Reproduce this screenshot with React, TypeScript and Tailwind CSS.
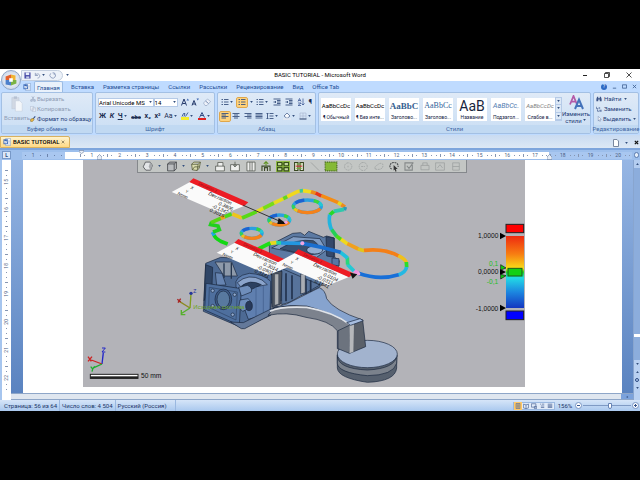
import React from 'react';
import clsx from 'clsx';

const tabs = ['Вставка', 'Разметка страницы', 'Ссылки', 'Рассылки', 'Рецензирование', 'Вид', 'Office Tab'];

const styleCards = [
  { sample: 'AaBbCcDc', name: '¶ Обычный', look: 'text-[6px] text-black' },
  { sample: 'AaBbCcDc', name: '¶ Без инте...', look: 'text-[6px] text-black' },
  { sample: 'AaBbC', name: 'Заголово...', look: "text-[9px] font-bold text-[#365f91] font-['Liberation_Serif',serif]" },
  { sample: 'AaBbCc', name: 'Заголово...', look: "text-[8px] text-[#2f6299] font-['Liberation_Serif',serif]" },
  { sample: 'AaB', name: 'Название', look: 'text-[14px] text-[#17243d]' },
  { sample: 'AaBbCc.', name: 'Подзагол...', look: 'text-[7px] italic text-[#4f7ab0]' },
  { sample: 'AaBbCcDc', name: 'Слабое в...', look: 'text-[6px] italic text-[#808080]' },
];

const Group = ({ title, className, children }: { title: string; className?: string; children: React.ReactNode }) => (
  <section className={clsx('flex flex-col rounded-[2px] border border-[#a3c0e4] bg-gradient-to-b from-[#dfeaf7] to-[#cadef4]', className)}>
    <div className="flex min-h-0 flex-1 items-center px-[2px]">{children}</div>
    <div className="flex h-2 items-center justify-center bg-[#c1d9f2] text-[6px] leading-[8px] whitespace-nowrap text-[#3f66a3]">{title}</div>
  </section>
);

const Tool = ({ label, active, className, children }: { label: string; active?: boolean; className?: string; children: React.ReactNode }) => (
  <button
    aria-label={label}
    className={clsx('flex h-[9px] items-center justify-center px-px text-[7px] leading-[9px] text-[#1c2c50]', active && 'rounded-[1px] bg-[#ffd27a] outline outline-[#e0a74a]', className)}
  >
    {children}
  </button>
);

const Caret = () => (
  <svg viewBox="0 0 4 3" className="mx-px h-[2px] w-[3px] shrink-0"><path d="M0 0h4L2 3z" fill="#34507f" /></svg>
);

const WordIcon = () => (
  <svg viewBox="0 0 18 18" className="h-2 w-2 shrink-0">
    <path d="M6 1h11v16H6z" fill="#fff" stroke="#5d83bd" />
    <path d="M11 5h5M11 8h5M11 11h5M11 14h5" stroke="#7b9bcb" />
    <path d="M1 3h10v11H1z" fill="#3766b5" />
    <path d="M3 6l1.500 6L6 7l1.500 5L9 6" fill="none" stroke="#fff" strokeWidth="1.500" />
  </svg>
);

const Lines = ({ kind }: { kind: 'left' | 'center' | 'right' | 'full' | 'list' | 'indent' | 'spacing' }) => {
  const d = {
    left: 'M1 3h14M1 6h9M1 9h14M1 12h9',
    center: 'M1 3h14M4 6h8M1 9h14M4 12h8',
    right: 'M1 3h14M6 6h9M1 9h14M6 12h9',
    full: 'M1 3h14M1 6h14M1 9h14M1 12h14',
    list: 'M1 3h3M6 3h9M1 8h3M6 8h9M1 13h3M6 13h9',
    indent: 'M1 2h14M8 5h7M8 8h7M8 11h7M1 14h14M1 8h5M4 6l2 2-2 2',
    spacing: 'M7 3h8M7 8h8M7 13h8M3 2v12M1 4l2-2 2 2M1 12l2 2 2-2',
  }[kind];
  return <svg viewBox="0 0 16 16" className="h-2 w-2"><path d={d} fill="none" stroke="#3b5480" strokeWidth="1.800" /></svg>;
};

const TitleBar = () => (
  <header className="flex h-3 items-center bg-white">
    <div className="flex w-[92px] items-center pl-[21px]">
      <div className="flex h-[11px] w-[42px] items-center justify-around rounded-r-full border border-[#c3cede] bg-[#edf2f9] pr-1">
        <button aria-label="Сохранить">
          <svg viewBox="0 0 16 16" className="h-[7px] w-[7px]"><path d="M1 1h14v14H1z" fill="#4b4fa8" /><path d="M4 1h8v6H4z" fill="#e6ecfa" /><path d="M5 10h7v5H5z" fill="#c2cbe8" /></svg>
        </button>
        <button aria-label="Отменить" className="flex items-center">
          <svg viewBox="0 0 16 16" className="h-[7px] w-[7px]"><path d="M3 2v6h6M3 8c3-6 11-4 10 2-.5 3-3 4-5 4" fill="none" stroke="#8d9cbb" strokeWidth="2" /></svg>
          <Caret />
        </button>
        <button aria-label="Вернуть">
          <svg viewBox="0 0 16 16" className="h-[7px] w-[7px]"><path d="M12 2a6.500 6.500 0 1 1-8 1M12 2v5M12 2H8" fill="none" stroke="#8d9cbb" strokeWidth="2" /></svg>
        </button>
      </div>
      <button aria-label="Настройка панели" className="ml-[2px]"><Caret /></button>
    </div>
    <h1 className="flex-1 text-center text-[6px] leading-[12px] text-black">BASIC TUTORIAL - Microsoft Word</h1>
    <div className="flex w-[92px] items-center justify-end gap-4 pr-2">
      <button aria-label="Свернуть"><svg viewBox="0 0 6 6" className="h-[6px] w-[6px]"><path d="M1 3.500h4" stroke="#222" /></svg></button>
      <button aria-label="Развернуть"><svg viewBox="0 0 6 6" className="h-[6px] w-[6px]"><path d="M.5 1.500h4v4h-4zM1.500 1.500v-1h4v4h-1" fill="none" stroke="#222" strokeWidth=".8" /></svg></button>
      <button aria-label="Закрыть"><svg viewBox="0 0 6 6" className="h-[6px] w-[6px]"><path d="M.5.5l5 5m0-5l-5 5" stroke="#222" strokeWidth=".8" /></svg></button>
    </div>
  </header>
);

const TabRow = () => (
  <nav className="flex h-[11px] items-center bg-[#bfdbff] pl-[23px] text-[6px] leading-[11px] whitespace-nowrap text-[#1e4d96]">
    <WordIcon />
    <button className="ml-[3px] h-[11px] w-[29px] rounded-t-[2px] border border-b-0 border-[#9bbbe3] bg-[#e9f1fb]">Главная</button>
    <div className="ml-2 flex gap-[9px]">
      {tabs.map((t) => <button key={t}>{t}</button>)}
    </div>
    <div className="ml-auto flex items-center gap-[5px] pr-[3px]">
      <button aria-label="Справка" className="flex h-[6px] w-[6px] items-center justify-center rounded-full bg-[#2e6ac4] text-[5px] text-white">?</button>
      <button aria-label="Свернуть окно"><svg viewBox="0 0 6 6" className="h-[5px] w-[5px]"><path d="M1 5h4" stroke="#3f5f92" /></svg></button>
      <button aria-label="Восстановить окно"><svg viewBox="0 0 6 6" className="h-[5px] w-[5px]"><path d="M.5 1h5v4h-5z" fill="none" stroke="#3f5f92" /></svg></button>
      <button aria-label="Закрыть окно"><svg viewBox="0 0 6 6" className="h-[5px] w-[5px]"><path d="M1 1l4 4m0-4L1 5" stroke="#3f5f92" /></svg></button>
    </div>
  </nav>
);

const Ribbon = () => (
  <div className="flex h-[43px] gap-[2px] bg-[#bfdbff] px-px pb-px">
    <Group title="Буфер обмена" className="w-[92px]">
      <button className="flex w-[26px] flex-col items-center gap-[2px] text-[6px] leading-[8px] text-[#8f9db5]">
        <svg viewBox="0 0 30 40" className="h-4 w-3"><path d="M2 4h18v28H2z" fill="#d1d8e3" stroke="#b8c3d4" /><path d="M7 1h8v6H7z" fill="#b6c1d2" /><path d="M11 12h11l6 6v20H11z" fill="#f3f6fa" stroke="#b8c3d4" /></svg>
        Вставить
      </button>
      <div className="flex flex-col text-[6px] leading-[10px] whitespace-nowrap text-[#8f9db5]">
        <button className="flex items-center gap-px">
          <svg viewBox="0 0 16 16" className="h-[6px] w-[6px]"><path d="M5 1l6 10M11 1L5 11" stroke="#8a98b2" strokeWidth="1.500" /><path d="M2 10h4v4H2zM10 10h4v4h-4z" fill="none" stroke="#8a98b2" strokeWidth="1.500" /></svg>
          Вырезать
        </button>
        <button className="flex items-center gap-px">
          <svg viewBox="0 0 16 16" className="h-[6px] w-[6px]"><path d="M1 1h9v10H1zM6 5h9v10H6z" fill="#e9eef6" stroke="#96a4bc" /></svg>
          Копировать
        </button>
        <button className="flex items-center gap-px text-[#1c3a75]">
          <svg viewBox="0 0 16 16" className="h-[6px] w-[6px]"><path d="M14 1L8 8" stroke="#2f4d88" strokeWidth="3" /><path d="M2 8l7-2 2 4-5 5-5-1z" fill="#e7b545" stroke="#645020" /></svg>
          Формат по образцу
        </button>
      </div>
    </Group>

    <Group title="Шрифт" className="w-[120px]">
      <div className="flex w-full flex-col gap-[5px]">
        <div className="flex items-center">
          <label aria-label="Шрифт" className="flex h-[9px] w-[57px] items-center border border-[#b5cae7] bg-white">
            <select className="w-full appearance-none bg-transparent text-[6px] leading-[7px] text-black"><option>Arial Unicode MS</option></select>
            <Caret />
          </label>
          <label aria-label="Размер" className="flex h-[9px] w-[25px] items-center border border-[#b5cae7] bg-white">
            <select className="w-full appearance-none bg-transparent text-[6px] leading-[7px] text-black"><option>14</option></select>
            <Caret />
          </label>
          <Tool label="Увеличить размер" className="ml-[2px]">
            <svg viewBox="0 0 16 16" className="h-2 w-2"><path d="M1 15L6 2l5 13M3 11h6" fill="none" stroke="#24396a" strokeWidth="2" /><path d="M11 5l2.500-4L16 5z" fill="#3c64b0" /></svg>
          </Tool>
          <Tool label="Уменьшить размер">
            <svg viewBox="0 0 16 16" className="h-2 w-2"><path d="M2 15L6 5l4 10M3 12h6" fill="none" stroke="#24396a" strokeWidth="2" /><path d="M11 1h5l-2.500 4z" fill="#3c64b0" /></svg>
          </Tool>
          <Tool label="Очистить формат" className="ml-[2px]">
            <svg viewBox="0 0 16 16" className="h-2 w-2"><path d="M1 10l8-8 6 5-7 8H4z" fill="#eef2fa" stroke="#7a8fb3" /><path d="M5 6l6 5" stroke="#7a8fb3" strokeWidth="2" /></svg>
          </Tool>
        </div>
        <div className="flex items-center justify-between">
          <Tool label="Полужирный" className="font-bold">Ж</Tool>
          <Tool label="Курсив" className="font-bold italic">К</Tool>
          <Tool label="Подчеркнутый" className="font-bold"><span className="underline">Ч</span><Caret /></Tool>
          <Tool label="Зачеркнутый"><span className="text-[6px] font-bold line-through">abc</span></Tool>
          <Tool label="Подстрочный" className="font-bold">x₂</Tool>
          <Tool label="Надстрочный" className="font-bold">x²</Tool>
          <Tool label="Регистр">Aa<Caret /></Tool>
          <Tool label="Выделение цветом">
            <svg viewBox="0 0 16 16" className="h-2 w-2"><path d="M0 10h16v6H0z" fill="#f4ee2c" /><path d="M2 9l3-6h3L6 9M9 9l5-8" fill="none" stroke="#456196" strokeWidth="2" /></svg>
            <Caret />
          </Tool>
          <Tool label="Цвет текста">
            <svg viewBox="0 0 16 16" className="h-2 w-2"><path d="M0 12h16v4H0z" fill="#e02020" /><path d="M3 11L8 1l5 10M5 7h6" fill="none" stroke="#344f86" strokeWidth="2" /></svg>
            <Caret />
          </Tool>
        </div>
      </div>
    </Group>

    <Group title="Абзац" className="w-[99px]">
      <div className="flex w-full flex-col gap-[5px]">
        <div className="flex items-center justify-between">
          <Tool label="Маркеры"><Lines kind="list" /><Caret /></Tool>
          <Tool label="Нумерация" active><Lines kind="list" /></Tool>
          <button aria-label="Параметры нумерации"><Caret /></button>
          <Tool label="Многоуровневый список"><Lines kind="list" /><Caret /></Tool>
          <Tool label="Уменьшить отступ"><Lines kind="indent" /></Tool>
          <Tool label="Увеличить отступ"><Lines kind="indent" /></Tool>
          <Tool label="Сортировка"><svg viewBox="0 0 16 16" className="h-2 w-2"><path d="M2 7l3-6 3 6M3 5h4M2 10h6l-6 5h6M12 1v13M9 11l3 3 3-3" fill="none" stroke="#3c5793" strokeWidth="1.500" /></svg></Tool>
          <Tool label="Непечатаемые знаки" className="font-bold">¶</Tool>
        </div>
        <div className="flex items-center justify-between">
          <Tool label="По левому краю" active><Lines kind="left" /></Tool>
          <Tool label="По центру"><Lines kind="center" /></Tool>
          <Tool label="По правому краю"><Lines kind="right" /></Tool>
          <Tool label="По ширине"><Lines kind="full" /></Tool>
          <Tool label="Интервал"><Lines kind="spacing" /><Caret /></Tool>
          <Tool label="Заливка"><svg viewBox="0 0 16 16" className="h-2 w-2"><path d="M2 8l6-6 6 6-6 5z" fill="#f6f8fc" stroke="#49618d" strokeWidth="1.500" /><path d="M0 14h16" stroke="#e4e8f0" strokeWidth="3" /></svg><Caret /></Tool>
          <Tool label="Границы"><svg viewBox="0 0 16 16" className="h-2 w-2"><path d="M2 2h12v12H2zM8 2v12M2 8h12" fill="none" stroke="#9cabc6" /><path d="M1 14h14" stroke="#354a73" strokeWidth="2" /></svg><Caret /></Tool>
        </div>
      </div>
    </Group>

    <Group title="Стили" className="min-w-0 flex-1">
      <div className="flex w-full items-center">
        <div className="flex gap-1">
          {styleCards.map((s, i) => (
            <button key={i} className="flex h-[23px] w-[30px] flex-col items-center justify-end bg-white">
              <span className={clsx('flex h-[14px] items-center leading-[14px] whitespace-nowrap', s.look)}>{s.sample}</span>
              <span className="text-[5px] leading-[8px] whitespace-nowrap text-[#14213f]">{s.name}</span>
            </button>
          ))}
        </div>
        <div className="flex h-[24px] w-[7px] shrink-0 flex-col border border-[#b5cae7] bg-[#dce8f6]">
          {['Вверх', 'Вниз', 'Все стили'].map((n) => (
            <button key={n} aria-label={n} className="flex flex-1 items-center justify-center border-b border-[#b5cae7]"><Caret /></button>
          ))}
        </div>
        <button className="flex flex-1 flex-col items-center text-[6px] leading-[7px] text-[#1c3a75]">
          <svg viewBox="0 0 30 30" className="h-[15px] w-[15px]">
            <path d="M2 19L9 2l7 17M5 13h8" fill="none" stroke="#b35aa8" strokeWidth="3.500" />
            <path d="M12 28l8-19 8 19M15 22h10" fill="none" stroke="#4472ba" strokeWidth="4" />
          </svg>
          Изменить
          <span className="flex items-center">стили<Caret /></span>
        </button>
      </div>
    </Group>

    <Group title="Редактирование" className="w-[46px]">
      <div className="flex flex-col text-[6px] leading-[10px] whitespace-nowrap text-[#1c3a75]">
        <button className="flex items-center gap-[2px]">
          <svg viewBox="0 0 16 16" className="h-[6px] w-[6px]"><path d="M1 8l2-6h3v12H1zM15 8l-2-6h-3v12h5zM6 6h4v3H6z" fill="#3c5487" /></svg>
          Найти <Caret />
        </button>
        <button className="flex items-center gap-[2px]">
          <svg viewBox="0 0 16 16" className="h-[6px] w-[6px]"><path d="M1 2v5h5M4 9v5h4" fill="none" stroke="#4b6393" strokeWidth="2" /><path d="M9 10h6v5H9zM7 3h4v4H7z" fill="#6c83ae" /></svg>
          Заменить
        </button>
        <button className="flex items-center gap-px">
          <svg viewBox="0 0 16 16" className="h-[6px] w-[6px]"><path d="M6 1l8 8-4 .5 2 4-2 1-2-4-2 3z" fill="#fff" stroke="#4b6393" /></svg>
          Выделить<Caret />
        </button>
      </div>
    </Group>
  </div>
);

const DocumentTabs = () => (
  <div className="flex h-[15px] items-end border-b-2 border-[#7ea5dc] bg-gradient-to-b from-[#c9dbf1] to-[#dde8f5]">
    <div className="flex h-[12px] w-[70px] items-center gap-[2px] rounded-tr-[2px] border border-[#d8b160] bg-gradient-to-b from-[#fff3cd] to-[#ffd983] pl-[2px] text-[6px] leading-[10px] font-medium whitespace-nowrap text-black">
      <WordIcon />
      BASIC TUTORIAL
      <button aria-label="Закрыть вкладку" className="ml-auto pr-1">
        <svg viewBox="0 0 6 6" className="h-1 w-1"><path d="M1 1l4 4m0-4L1 5" stroke="#6e6242" /></svg>
      </button>
    </div>
    <div className="ml-auto flex h-[11px] items-center gap-[5px] pr-px">
      <button aria-label="Новый документ"><svg viewBox="0 0 6 8" className="h-2 w-[6px]"><path d="M.5.5h3.500L5.500 2v5.500h-5z" fill="#fff" stroke="#7a889f" /></svg></button>
      <button aria-label="Список вкладок"><Caret /></button>
      <button aria-label="Закрыть"><svg viewBox="0 0 6 6" className="h-[5px] w-[5px]"><path d="M1 1l4 4m0-4L1 5" stroke="#111" strokeWidth="1.500" /></svg></button>
    </div>
  </div>
);

const columns = Array.from({ length: 20 }, (_, i) => i + 1);

const RulerCell = ({ n, outside }: { n: number; outside?: boolean }) => (
  <div className={clsx('flex h-[7px] items-center justify-around text-[5px] leading-[7px] text-[#4a5d80]', outside ? 'bg-[#a9c7f0]' : 'bg-white')}>
    <i className="h-[3px] w-px bg-[#8696b2]" />
    <i className="h-px w-px bg-[#8696b2]" />
    <span className="w-2 text-center">{n}</span>
    <i className="h-px w-px bg-[#8696b2]" />
    <i className="h-px w-px bg-[#8696b2]" />
  </div>
);

const HorizontalRuler = () => (
  <div className="relative flex h-[10px] items-center bg-[#9dbfec]">
    <button aria-label="Табуляция" className="ml-[2px] flex h-[8px] w-[9px] items-center justify-center border border-[#7899c8] bg-[#dbe8f8] text-[5px] leading-[7px] font-bold text-[#2c4a80]">L</button>
    <div className="ml-[11px] flex h-[7px] w-[43px] items-center justify-around bg-[#a9c7f0] text-[5px] leading-[7px] text-[#4a5d80]">
      <i className="h-px w-px bg-[#6c83ac]" />
      <span>1</span>
      <i className="h-px w-px bg-[#6c83ac]" />
      <i className="h-[3px] w-px bg-[#6c83ac]" />
      <i className="h-px w-px bg-[#6c83ac]" />
      <i className="h-px w-px bg-[#6c83ac]" />
    </div>
    <div className="h-[7px] w-[13px] bg-white" />
    <div className="grid flex-1 grid-cols-20">
      {columns.map((n) => <RulerCell key={n} n={n} outside={n > 17} />)}
    </div>
    <button aria-label="Линейка" className="mr-px ml-[2px] flex h-[6px] w-[5px] items-center justify-center rounded-full border border-[#5c7cae] bg-[#e3edf9]" />
    {/* indent markers sit on top of the scale */}
    <svg viewBox="0 0 8 5" className="absolute top-0 left-[79px] h-1 w-[5px]"><path d="M0 0h8v2L4 5 0 2z" fill="#e8eef7" stroke="#6a7f9f" /></svg>
    <svg viewBox="0 0 8 8" className="absolute bottom-0 left-[97px] h-[6px] w-[5px]"><path d="M0 8V4l4-4 4 4v4z" fill="#e8eef7" stroke="#6a7f9f" /></svg>
    <svg viewBox="0 0 8 8" className="absolute right-[88px] bottom-0 h-[6px] w-[5px]"><path d="M0 8V4l4-4 4 4v4z" fill="#e8eef7" stroke="#6a7f9f" /></svg>
  </div>
);

const icon3d = 'h-[11px] w-[12px]';

const ViewerToolbar = () => (
  <div className="absolute top-0 left-[54px] flex h-[13px] w-[330px] items-center justify-between border border-t-0 border-[#85888c] bg-[#c3c6c4] px-1">
    <button aria-label="Сфера"><svg viewBox="0 0 30 30" className={icon3d}><path d="M8 3h13l6 9-5 13H9L2 16z" fill="#e3e5e7" stroke="#3c3f43" strokeWidth="2" /><path d="M21 3l6 9-5 13-5-9z" fill="#a5a8ab" /></svg></button>
    <Caret />
    <button aria-label="Куб"><svg viewBox="0 0 30 30" className={icon3d}><path d="M3 8l6-5h18v18l-6 6H3zM3 8h18v19M21 8l6-5" fill="#b9bcbe" stroke="#333639" strokeWidth="2" /></svg></button>
    <Caret />
    <button aria-label="Каркас"><svg viewBox="0 0 30 30" className={icon3d}><path d="M3 9l6-6h18l-3 16-6 7-13-2zM3 9h18l6-6M21 9l-3 17M5 24l6-8h13" fill="#dadcae" stroke="#4d5230" strokeWidth="2" /></svg></button>
    <Caret />
    {['M3 14h24v13H3zM9 14V4h14v10', 'M3 10h24v17H3zM15 2v14M10 11l5 5 5-5', 'M4 3h22v24H4zM12 3v24M18 3v24'].map((d) => (
      <button key={d} aria-label="Сечение"><svg viewBox="0 0 30 30" className={icon3d}><path d={d} fill="#eeefed" stroke="#4c5048" strokeWidth="2" /></svg></button>
    ))}
    <button aria-label="Выровнять"><svg viewBox="0 0 30 30" className={icon3d}><path d="M4 27V14h22v13M11 27v-9h8v9" fill="none" stroke="#3f4c2c" strokeWidth="3" /><path d="M15 13V2M9 8l6-6 6 6" fill="none" stroke="#5f9420" strokeWidth="3" /></svg></button>
    <button aria-label="Сетка" className="bg-[#93bd45]"><svg viewBox="0 0 36 30" className="h-[11px] w-[14px]"><path d="M3 4h12v9H3zM21 4h12v9H21zM3 18h12v9H3zM21 18h12v9H21zM15 8h6M15 22h6" fill="#c4d6a0" stroke="#37501a" strokeWidth="3" /></svg></button>
    <button aria-label="Сравнить"><svg viewBox="0 0 30 30" className={icon3d}><path d="M3 4h9v22H3zM18 4h9v22h-9z" fill="#e9ecdc" stroke="#384720" strokeWidth="3" /><path d="M6 14h18" stroke="#c93333" strokeWidth="3" /><path d="M8 20h14M8 8h14" stroke="#77a334" strokeWidth="3" /></svg></button>
    <button aria-label="Линия"><svg viewBox="0 0 30 30" className={icon3d}><path d="M4 4l22 22" stroke="#989b9b" strokeWidth="2" /></svg></button>
    <button aria-label="Рамка"><svg viewBox="0 0 36 30" className="h-[11px] w-[14px]"><path d="M2 3h32v24H2z" fill="#85b935" stroke="#496c1c" strokeWidth="3" strokeDasharray="3 2" /></svg></button>
    {['M15 5a10 10 0 1 0 1 0M15 13v4', 'M15 4a11 11 0 1 0 1 0M10 15h10', 'M5 22c-4-8 4-9 8-13s14-4 13 4-8 12-21 9z'].map((d) => (
      <button key={d} aria-label="Область"><svg viewBox="0 0 30 30" className={icon3d}><path d={d} fill="none" stroke="#9a9d9d" strokeWidth="2" strokeDasharray="5 2" /></svg></button>
    ))}
    <button aria-label="Лассо"><svg viewBox="0 0 30 30" className={icon3d}><path d="M9 22C2 20 2 8 10 5s18 2 16 11" fill="none" stroke="#4b4e50" strokeWidth="3" strokeDasharray="5 2" /><path d="M14 11l11 11h-5l2 6-3 1-2-6-3 3z" fill="#333" /></svg></button>
    <button aria-label="Применить"><svg viewBox="0 0 30 30" className={icon3d}><path d="M4 5h20v20H4zM9 13l6 7L27 4" fill="none" stroke="#858989" strokeWidth="3" /></svg></button>
    {['M4 12h22v12H4zM9 12V5h12v7', 'M3 5h24v20H3zM8 19l7-9 7 9', 'M6 5h18v20H6zM6 15h18'].map((d) => (
      <button key={d} aria-label="Инструмент"><svg viewBox="0 0 30 30" className={icon3d}><path d={d} fill="none" stroke="#9a9d9d" strokeWidth="2" /></svg></button>
    ))}
  </div>
);

const contour = [
  { d: 'M143 222L120 213', c: '#12d812' },
  { d: 'M121 213Q104 204 102 194', c: '#12d812' },
  { d: 'M103 196L97 186', c: '#22a6e8' },
  { d: 'M99 186L118 179L114 168L92 164L95 156', c: '#22cf20' },
  { d: 'M93 158L125 144', c: '#57d614' },
  { d: 'M122 145L135 140', c: '#f2a21b' },
  { d: 'M134 140L155 132', c: '#4fd81a' },
  { d: 'M157 132L186 144', c: '#eec41c' },
  { d: 'M186 144L230 125', c: '#58d916' },
  { d: 'M230 125L252 114', c: '#e6dc1e' },
  { d: 'M250 115L282 99', c: '#77dd17' },
  { d: 'M282 99L310 86', c: '#e6dc1e' },
  { d: 'M310 86L322 80', c: '#63d81b' },
  { d: 'M322 80L352 65L364 62', c: '#f0d81e' },
  { d: 'M359 63L369 62', c: '#3bc7a0' },
  { d: 'M369 62L395 66', c: '#f0dc1e' },
  { d: 'M393 65L407 70', c: '#ee8b18' },
  { d: 'M407 69L424 78', c: '#ea3515' },
  { d: 'M424 77L475 98', c: '#f48c14' },
  { d: 'M474 98L484 104', c: '#e9d51c' },
  { d: 'M484 104L495 111', c: '#f18a18' },
  { d: 'M496 111L493 121', c: '#2c99bb' },
  { d: 'M492 118L461 124', c: '#2fc9aa' },
  { d: 'M461 124L449 135', c: '#26d927' },
  { d: 'M449 134Q445 158 455 180', c: '#22b4de' },
  { d: 'M455 179L470 199', c: '#23cf55' },
  { d: 'M469 198L484 209', c: '#4cdb18' },
  { d: 'M483 208L503 222', c: '#f0d91c' },
  { d: 'M502 221L535 237', c: '#f2a01b' },
  { d: 'M534 237L553 242', c: '#e2c61c' },
  { d: 'M552 241Q613 234 656 258', c: '#f47f17' },
  { d: 'M655 257Q678 269 679 278', c: '#f0c01b' },
  { d: 'M679 276L680 292', c: '#2ade2a' },
  { d: 'M680 291Q677 307 655 315', c: '#24b8e3' },
  { d: 'M656 314Q598 332 535 310', c: '#176fd8' },
  { d: 'M535 310L514 297', c: '#ed92de' },
  { d: 'M522 303L502 283', c: '#24c9d3' },
  { d: 'M503 284L502 262', c: '#28d77a' },
  { d: 'M503 264L480 246', c: '#20c0de' },
  { d: 'M482 247Q426 230 367 220', c: '#1b6fd0' },
  { d: 'M370 220L303 219', c: '#2297df' },
  { d: 'M303 219L287 218', c: '#24d6a0' },
  { d: 'M289 218L269 220', c: '#e7d71d' },
  { d: 'M271 219L235 237', c: '#1cdf16' },
];

const ringColors = [
  { c: '#2b9fe0', from: 0, len: 100 },
  { c: '#22c9d4', from: 92, len: 8 },
  { c: '#f5821a', from: 4, len: 36 },
  { c: '#efc21c', from: 40, len: 6 },
  { c: '#2ed35c', from: 46, len: 6 },
  { c: '#1c62d0', from: 56, len: 14 },
  { c: '#38d83a', from: 84, len: 8 },
];

const Ring = ({ cx, cy, rx, ry }: { cx: number; cy: number; rx: number; ry: number }) => (
  <g fill="none" strokeWidth="10">
    {ringColors.map((r) => (
      <ellipse key={r.c} cx={cx} cy={cy} rx={rx} ry={ry} pathLength={100} stroke={r.c} strokeDasharray={`${r.len} ${100 - r.len}`} strokeDashoffset={-r.from} />
    ))}
  </g>
);

const Callout = ({ x, y, values }: { x: number; y: number; values: string[] }) => (
  <g transform={`translate(${x} ${y})`}>
    <path d="M-10 11L152 83L90 108L-65 41z" fill="#fafafa" />
    <path d="M0 0L165 72L152 84L-12 11z" fill="#ed1c24" />
    <g transform="rotate(24)" fontFamily="Liberation Sans, sans-serif" fontSize="15" fontStyle="italic" fill="#111">
      <text x="20" y="11" fontSize="12" fill="#9c1218">Deviation 1</text>
      <text x="60" y="27">Dev.raction</text>
      <text x="100" y="42">{values[0]}</text>
      <text x="86" y="57">{values[1]}</text>
      <text x="84" y="71">{values[2]}</text>
      <text x="4" y="32" fontSize="13">X</text>
      <text x="-6" y="48" fontSize="13">Y</text>
      <text x="-24" y="64" fontSize="13">Norm</text>
    </g>
  </g>
);

const Part = () => (
  <g stroke="#18263c" strokeWidth="2" strokeLinejoin="round">
    {/* rear housing */}
    <path d="M268 226L338 190L362 188L374 196L386 184L430 202L440 198L463 204L464 262L478 272L476 288L420 350L376 372L270 400z" fill="#5c7aa3" />
    <path d="M275 234L340 200L420 206L440 240L410 262L330 245z" fill="#809cc3" />
    <path d="M300 236Q350 205 400 212Q424 226 418 250L382 256z" fill="#39506f" />
    <ellipse cx="404" cy="240" rx="24" ry="12" fill="#94add1" />
    <path d="M438 200L462 204V262L440 258z" fill="#34486a" />
    <path d="M456 264L477 266V288L456 284z" fill="#5676a4" />
    <path d="M304 295L420 345L330 396L305 404z" fill="#57739b" />
    <path d="M318 310v84M336 316v72M378 326v46M392 330v36" stroke="#22334e" strokeWidth="5" />
    <path d="M362 312h14v56l-14 4z" fill="#a9adb4" />
    {/* front housing */}
    <path d="M77 280L122 262L190 266L272 306L278 320L272 436L188 474L150 458L70 424z" fill="#4d6a94" />
    <path d="M77 284L98 292L96 348L72 392z" fill="#2f4566" />
    <path d="M105 276L155 276L172 318L132 318z" fill="#8e9aaa" />
    <path d="M132 280v44M154 278v48" stroke="#25364f" strokeWidth="4" />
    <path d="M168 350Q160 318 208 310Q250 312 272 334L270 430L205 448z" fill="#5f7faf" />
    <path d="M172 338Q205 308 246 330L262 344L228 350Q200 332 182 350z" fill="#8ba4cb" />
    <path d="M184 350Q208 326 244 344L215 358z" fill="#2c4060" />
    <path d="M106 308L126 310L138 345L110 346z" fill="#6684b1" />
    <path d="M78 340L184 356L178 466L74 420z" fill="#4e6f9e" />
    <path d="M88 352L172 366L168 450L86 412z" fill="none" stroke="#2d4364" />
    <ellipse cx="130" cy="388" rx="25" ry="31" fill="#3f5c88" />
    <ellipse cx="130" cy="388" rx="19" ry="25" fill="#58799f" />
    <g fill="#90a9cd">
      <circle cx="98" cy="362" r="5" /><circle cx="164" cy="374" r="5" /><circle cx="98" cy="408" r="5" /><circle cx="158" cy="434" r="5" />
    </g>
    <path d="M176 352L202 346Q218 352 214 366L184 378z" fill="#6f8ebb" />
    <path d="M180 390L204 386Q216 394 214 412L188 424L176 412z" fill="#6e8ebc" />
    <ellipse cx="207" cy="408" rx="10" ry="14" fill="#27395a" />
    <path d="M228 352v86M250 348v80" stroke="#4a6896" strokeWidth="3" />
    <path d="M275 306L306 304L302 402L276 412z" fill="#4b535f" />
    <path d="M284 312h12v90l-12 4z" fill="#aeb0b3" strokeWidth="1" />
    <path d="M152 456L190 458L275 416L310 410L262 440L194 476L184 476z" fill="#64799a" />
    {/* arm */}
    <path d="M264 436L286 410Q400 398 480 438L512 464L508 550L472 536V482Q450 452 378 442Q320 424 264 436z" fill="#7c828d" />
    <path d="M278 414L320 402L418 353Q436 360 440 386Q460 420 548 450L540 458L512 465Q450 426 380 408Q330 402 278 414z" fill="#86a3ce" />
    <path d="M270 424Q300 408 380 412Q460 426 510 464" fill="none" stroke="#e0e3e8" strokeWidth="5" />
    {/* disc foot */}
    <path d="M472 554V594Q474 624 562 637Q646 634 650 594V554z" fill="#56606e" />
    <path d="M472 556Q472 596 562 600Q646 596 651 556L650 580Q640 616 562 617Q474 608 472 580z" fill="#7b828c" />
    <ellipse cx="562" cy="552" rx="90" ry="41" fill="#a2b3ce" />
    <path d="M474 536V482L512 464L508 550z" fill="#6c737e" />
    <path d="M512 464L548 450L557 530L509 550z" fill="#5a6069" />
    <path d="M509 466L522 462L520 546L508 550z" fill="#b5b7ba" stroke="none" />
    <path d="M500 458L540 446L550 452L512 466z" fill="#a7bddf" />
  </g>
);

const ModelView = () => (
  <svg viewBox="-291 -30 1326 681" className="block w-full" role="img" aria-label="3D-модель с отклонениями">
    <defs>
      <linearGradient id="scale" x1="0" y1="0" x2="0" y2="1">
        <stop offset="0" stopColor="#ee2a10" />
        <stop offset=".25" stopColor="#f77d12" />
        <stop offset=".45" stopColor="#f8dc18" />
        <stop offset=".5" stopColor="#20d820" />
        <stop offset=".58" stopColor="#22dbe6" />
        <stop offset=".78" stopColor="#1c86e0" />
        <stop offset="1" stopColor="#1436c0" />
      </linearGradient>
    </defs>
    <rect x="-291" y="-30" width="1326" height="681" fill="#b3b3b8" />
    <Part />
    <g fill="none" strokeWidth="11">
      {contour.map((s) => <path key={s.d} d={s.d} stroke={s.c} />)}
    </g>
    <Ring cx={382} cy={109} rx={42} ry={19} />
    <Ring cx={298} cy={150} rx={31} ry={15} />
    <Ring cx={215} cy={190} rx={31} ry={15} />
    <Callout x={40} y={25} values={['0.3806', '-0.1347', '0.3015']} />
    <Callout x={175} y={207} values={['0.3014', '-0.0901', '0.3141']} />
    <Callout x={355} y={238} values={['0.0104', '-0.0311', '0.1541']} />
    <path d="M190 106L300 154" stroke="#333" strokeWidth="3" />
    <path d="M296 144L320 162L292 162z" fill="#111" />
    <path d="M510 308L532 313L518 326z" fill="#111" />
    <g fill="#f2a3df"><circle cx="318" cy="157" r="5" /><circle cx="367" cy="220" r="6" /><circle cx="536" cy="311" r="5" /></g>

    <g fill="none" strokeWidth="4">
      <path d="M30 414L33 372" stroke="#7f9d1e" />
      <path d="M30 414L-2 394" stroke="#8d8a22" />
      <path d="M30 414L2 432M4 420v14h12" stroke="#55b02c" />
      <path d="M-8 388l10 8M2 386l-8 12" stroke="#a82424" />
    </g>
    <circle cx="33" cy="370" r="5" fill="#26379b" />
    <g fontFamily="Liberation Sans, sans-serif" fontSize="18">
      <text x="40" y="368" fontSize="15" fill="#222f9b">Z</text>
      <text x="40" y="418" fill="#6da324">Исходная система</text>
    </g>

    <g fill="none" strokeWidth="4">
      <path d="M-234 582L-230 548" stroke="#2226c8" />
      <path d="M-234 582L-266 570M-276 560l10 14M-264 560l-12 14" stroke="#cc2222" />
      <path d="M-234 582L-258 593M-268 590l6 7 6-8M-262 597l-2 8" stroke="#1fae2f" />
      <path d="M-234 534h10l-10 12h10" stroke="#2226c8" strokeWidth="3" />
    </g>
    <rect x="-269" y="613" width="143" height="12" fill="#fff" stroke="#222" strokeWidth="3" />
    <rect x="-269" y="619" width="143" height="7" fill="#222" />

    <rect x="978" y="163" width="53" height="25" fill="#f00" stroke="#222" strokeWidth="3" />
    <rect x="978" y="198" width="54" height="216" fill="url(#scale)" />
    <rect x="984" y="295" width="42" height="23" fill="#12d012" stroke="#1b5c1b" strokeWidth="3" />
    <rect x="978" y="423" width="53" height="26" fill="#00f" stroke="#222" strokeWidth="3" />
    <path d="M960 188l18 10-18 10zM960 297l18 9-18 9zM960 404l18 10-18 10z" fill="#000" />
    <path d="M962 284l16 10-16 6zM962 313l16 4-16 10z" fill="#12d012" stroke="#111" strokeWidth="2" />
    <g fontFamily="Liberation Sans, sans-serif" fontSize="20" textAnchor="end" fill="#111">
      <text x="955" y="205">1,0000</text>
      <text x="955" y="313">0,0000</text>
      <text x="955" y="422">-1,0000</text>
      <text x="955" y="287" fill="#1fbf1f">0,1</text>
      <text x="955" y="342" fill="#1fbf1f">-0,1</text>
      <text x="-117" y="625" textAnchor="start">50 mm</text>
    </g>
  </svg>
);

const VerticalRuler = () => (
  <div className="flex w-[9px] flex-col items-center bg-white pt-2">
    {[15, 16, 17, 18, 19, 20, 21, 22].map((n) => (
      <div key={n} className="flex h-7 flex-col items-center justify-around text-[5px] leading-[7px] text-[#4a5d80]">
        <i className="h-px w-[3px] bg-[#8696b2]" />
        <i className="h-px w-px bg-[#8696b2]" />
        <span className="rotate-180 [writing-mode:vertical-rl]">{n}</span>
        <i className="h-px w-px bg-[#8696b2]" />
        <i className="h-px w-px bg-[#8696b2]" />
      </div>
    ))}
  </div>
);

const Workspace = () => (
  <div className="flex bg-[#6f97cf]">
    <div className="flex w-[11px] bg-[#a6c5ee] pl-[2px]"><VerticalRuler /></div>
    <div className="flex min-w-0 flex-1 flex-col">
      <div className="flex bg-gradient-to-b from-[#96b6e4] to-[#5a83c0] pr-[11px] pl-3">
        <main className="flex-1 bg-white pr-[97px] pb-[6px] pl-[60px]">
          <div className="relative">
            <ModelView />
            <ViewerToolbar />
          </div>
        </main>
      </div>
      <div className="flex h-[7px] items-center justify-end border-y border-[#8ea6c8] bg-[#dfe6ef]">
        <button aria-label="Прокрутить вправо" className="flex h-[5px] w-3 items-center justify-center bg-[#7ba2dc]"><span className="-rotate-90"><Caret /></span></button>
      </div>
    </div>
    <div className="flex w-[7px] flex-col items-center border-l border-[#88a5cf] bg-[#8caddc]">
      <button aria-label="Вверх" className="flex h-2 w-full items-center justify-center bg-[#b4cdf0]"><span className="rotate-180"><Caret /></span></button>
      <div className="mt-[166px] h-[3px] w-full bg-white" />
      <div className="mt-auto flex w-full flex-col items-center bg-[#b9d1f2] pb-2">
        <button aria-label="Вниз" className="flex h-2 items-center"><Caret /></button>
        <button aria-label="Предыдущая страница" className="flex h-2 items-center"><span className="rotate-180"><Caret /></span></button>
        <button aria-label="Объект перехода" className="my-[2px] h-1 w-1 rounded-full border border-[#2b4a82]" />
        <button aria-label="Следующая страница" className="flex h-2 items-center"><Caret /></button>
      </div>
    </div>
  </div>
);

const StatusBar = () => (
  <footer className="flex h-[11px] items-center bg-gradient-to-b from-[#d6e5f8] to-[#a9c8ee] pl-1 text-[6px] leading-[11px] whitespace-nowrap text-[#1b3568]">
    <span className="border-r border-[#9ab8e0] pr-[2px]">Страница: 56 из 64</span>
    <span className="border-r border-[#9ab8e0] px-[2px]">Число слов: 4 504</span>
    <span className="border-r border-[#9ab8e0] pr-2 pl-[2px]">Русский (Россия)</span>
    <div className="ml-auto flex h-2 items-center border border-[#9ab8e0] bg-[#e1ebf8]">
      {['Разметка', 'Чтение', 'Веб', 'Структура', 'Черновик'].map((v, i) => (
        <button key={v} aria-label={v} className={clsx('flex h-[8px] w-2 items-center justify-center', i === 0 && 'bg-[#ffc765]')}>
          <svg viewBox="0 0 16 16" className="h-[6px] w-[6px]">
            <path d={['M3 1h10v14H3zM5 5h6M5 8h6M5 11h6', 'M1 3l7 2 7-2v10l-7 2-7-2zM8 5v10', 'M1 2h12v9H1zM9 9h6v6H9z', 'M3 3h3M8 3h6M5 8h9M5 12h9', 'M2 3h12M2 6h12M2 9h12M2 12h12'][i]} fill="none" stroke="#566f9d" strokeWidth="2" />
          </svg>
        </button>
      ))}
    </div>
    <span className="w-5 text-center">156%</span>
    <button aria-label="Уменьшить" className="flex h-[7px] w-[7px] shrink-0 items-center justify-center rounded-full border border-[#7895c3] bg-white"><i className="h-px w-[3px] bg-[#35558e]" /></button>
    <input
      type="range"
      aria-label="Масштаб"
      min={0}
      max={100}
      defaultValue={56}
      className="mx-px h-[7px] w-12 appearance-none bg-linear-to-b from-transparent from-40% via-[#7f9ac4] via-50% to-transparent to-60% [&::-webkit-slider-thumb]:h-[6px] [&::-webkit-slider-thumb]:w-1 [&::-webkit-slider-thumb]:appearance-none [&::-webkit-slider-thumb]:rounded-b-[2px] [&::-webkit-slider-thumb]:border [&::-webkit-slider-thumb]:border-[#6683b4] [&::-webkit-slider-thumb]:bg-white"
    />
    <button aria-label="Увеличить" className="mr-px flex h-[7px] w-[7px] shrink-0 items-center justify-center rounded-full border border-[#7895c3] bg-white">
      <svg viewBox="0 0 5 5" className="h-[5px] w-[5px]"><path d="M2.500 1v3M1 2.500h3" stroke="#35558e" /></svg>
    </button>
  </footer>
);

const App = () => (
  <div className="min-h-screen bg-black py-[69px] font-[Roboto,sans-serif]">
    <div className="relative">
      <TitleBar />
      <TabRow />
      <Ribbon />
      <DocumentTabs />
      <HorizontalRuler />
      <Workspace />
      <StatusBar />
      {/* the round menu button hangs over the title and tab rows */}
      <button aria-label="Office" className="absolute top-[1px] left-px h-5 w-5 rounded-full border border-[#8fa5c6] bg-radial from-[#ffffff] to-[#bccbe2]">
        <svg viewBox="0 0 20 20" className="h-full w-full">
          <path d="M4 6l6-2v6H4z" fill="#e5602c" />
          <path d="M10 4l5 1v5h-5z" fill="#f0b434" />
          <path d="M4 10h6v6l-6-1z" fill="#4d80cc" />
          <path d="M10 10h6v4l-6 2z" fill="#7bb345" />
          <path d="M8 8h4v4H8z" fill="#fff" />
        </svg>
      </button>
    </div>
  </div>
);

export default App;
